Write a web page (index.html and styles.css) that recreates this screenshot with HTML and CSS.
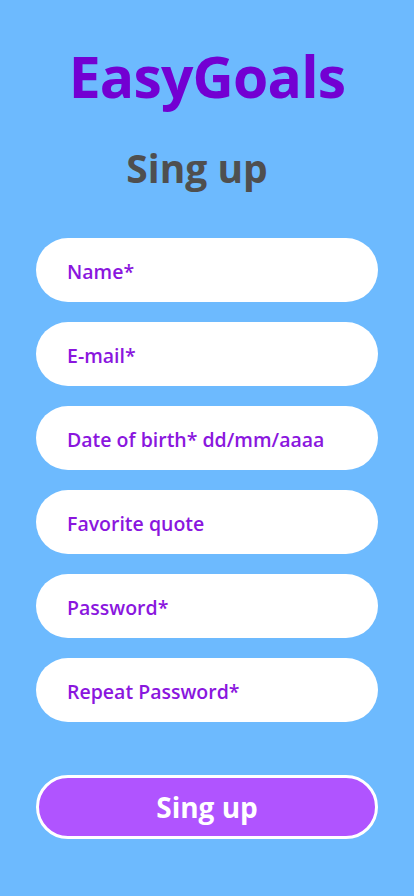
FILE: index.html
```html
<!DOCTYPE html>
<html lang="en">
<head>
<meta charset="utf-8">
<title>EasyGoals - Sign up</title>
<link rel="stylesheet" href="styles.css">
</head>
<body>
<main class="page">
  <h1 class="brand">EasyGoals</h1>
  <h2 class="subtitle">Sing up</h2>
  <form class="form">
    <input class="field" type="text" placeholder="Name*">
    <input class="field" type="email" placeholder="E-mail*">
    <input class="field" type="text" placeholder="Date of birth* dd/mm/aaaa">
    <input class="field" type="text" placeholder="Favorite quote">
    <input class="field" type="password" placeholder="Password*">
    <input class="field" type="password" placeholder="Repeat Password*">
    <button class="submit" type="button">Sing up</button>
  </form>
</main>
</body>
</html>
```
FILE: styles.css
```css
html, body {
  margin: 0;
  padding: 0;
  background: #6dbafe;
}
body {
  font-family: "Open Sans", "Noto Sans", sans-serif;
  width: 414px;
  height: 896px;
  overflow: hidden;
}
.page {
  display: flex;
  flex-direction: column;
  align-items: center;
  padding: 40px 36px 0;
}
.brand {
  margin: 0;
  font-size: 57px;
  font-weight: 700;
  line-height: 72px;
  color: #7300d2;
  letter-spacing: -0.8px;
}
.subtitle {
  margin: 30px 20px 0 0;
  font-size: 39px;
  font-weight: 700;
  line-height: 52px;
  color: #4f4f4f;
}
.form {
  align-self: stretch;
  display: flex;
  flex-direction: column;
  gap: 20px;
  margin-top: 44px;
}
.field {
  box-sizing: border-box;
  height: 64px;
  width: 100%;
  border: none;
  border-radius: 32px;
  background: #ffffff;
  padding: 2px 20px 0 31px;
  font-family: inherit;
  font-size: 19.5px;
  font-weight: 600;
  color: #8a16de;
  outline: none;
}
.field::placeholder {
  color: #8a16de;
  opacity: 1;
}
.submit {
  box-sizing: border-box;
  height: 64px;
  width: 100%;
  margin-top: 33px;
  border: 3px solid #ffffff;
  border-radius: 32px;
  background: #b054ff;
  color: #ffffff;
  font-family: inherit;
  font-size: 28px;
  font-weight: 700;
  cursor: pointer;
}
```
